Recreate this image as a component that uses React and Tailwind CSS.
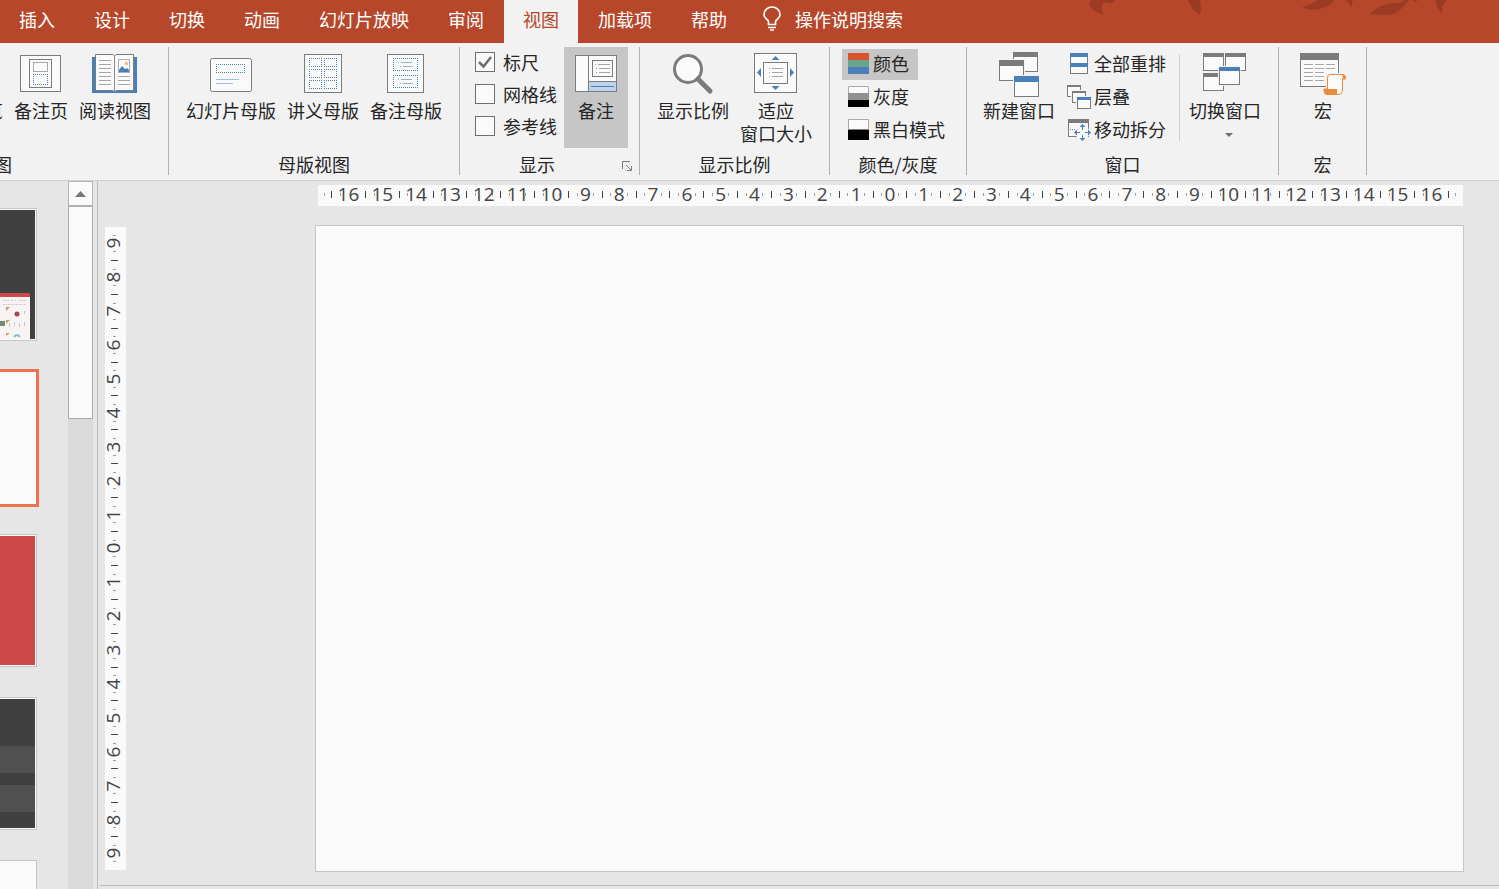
import React from "react";

const tabs = ["插入", "设计", "切换", "动画", "幻灯片放映", "审阅", "视图", "加载项", "帮助"];

// dotted placeholder outline, dots sit on whole pixels
const Dotted = ({ x, y, w, h }) => (
  <path
    d={`M${x} ${y + 0.5}h${w}M${x} ${y + h - 0.5}h${w}M${x + 0.5} ${y}v${h}M${x + w - 0.5} ${y}v${h}`}
    fill="none"
    stroke="#4a80b9"
    strokeDasharray="1 1"
  />
);

const NotesPageIcon = () => (
  <svg width="42" height="44" viewBox="0 0 42 44" fill="#fafafa" stroke="#7b7b7b">
    <rect x="0.5" y="3.5" width="40" height="36" />
    <rect x="9.5" y="7.5" width="22" height="28" />
    <rect x="13.5" y="10.5" width="14" height="9" stroke="#a8a8a8" />
    <Dotted x={13} y={22} w={15} h={11} />
  </svg>
);

const ReadingIcon = () => (
  <svg width="46" height="44" viewBox="0 0 46 44">
    <rect x="0" y="5" width="45" height="36" fill="#4a80b9" />
    <path d="M3.5 2.5H21L22.5 4L24 2.5H41.5V38.5H25L22.5 39.5L20 38.5H3.5Z" fill="#fafafa" stroke="#7b7b7b" />
    <path d="M22.5 4V39" stroke="#8a8a8a" />
    <path d="M7 8.5H19M7 12.5H19M7 16.5H19M7 20.5H19M7 24.5H19M7 28.5H19M7 32.5H19M26 24.5H38M26 28.5H38M26 32.5H38" stroke="#a6a6a6" />
    <rect x="26.5" y="7.5" width="11" height="13" fill="#fafafa" stroke="#b0b0b0" />
    <path d="M27 20V18L30 14L33 17L35 16L37 18V20Z" fill="#4a80b9" />
    <circle cx="34.5" cy="11.5" r="1.8" fill="#eebe7a" />
  </svg>
);

const SlideMasterIcon = () => (
  <svg width="42" height="44" viewBox="0 0 42 44" fill="none">
    <rect x="0.5" y="6.5" width="41" height="33" rx="2" fill="#fafafa" stroke="#7b7b7b" />
    <Dotted x={6} y={12} w={29} h={9} />
    <path d="M6 27.5H29M6 31.5H23" stroke="#a3c0de" />
  </svg>
);

const HandoutMasterIcon = () => (
  <svg width="38" height="44" viewBox="0 0 38 44" fill="none">
    <rect x="0.5" y="2.5" width="37" height="38" fill="#fafafa" stroke="#7b7b7b" />
    {[6, 17, 28].map((y) => (
      <g key={y}>
        <Dotted x={5} y={y} w={13} h={9} />
        <Dotted x={20} y={y} w={13} h={9} />
      </g>
    ))}
  </svg>
);

const NotesMasterIcon = () => (
  <svg width="38" height="44" viewBox="0 0 38 44" fill="none">
    <rect x="0.5" y="2.5" width="36" height="38" fill="#fafafa" stroke="#7b7b7b" />
    {[6, 23].map((y) => (
      <g key={y}>
        <Dotted x={6} y={y} w={25} h={13} />
        <path d={`M11 ${y + 4.5}h1M14 ${y + 4.5}h11M13 ${y + 8.5}h1M16 ${y + 8.5}h10`} stroke="#8fb2d6" />
      </g>
    ))}
  </svg>
);

const NotesIcon = () => (
  <svg width="42" height="44" viewBox="0 0 42 44" fill="none">
    <rect x="0.5" y="3.5" width="41" height="36" fill="#fafafa" stroke="#7b7b7b" />
    <rect x="14" y="30" width="27" height="9" fill="#bdd3ea" />
    <path d="M13.5 4V39M14 29.5H41" stroke="#7b7b7b" />
    <path d="M16 34.5H39" stroke="#4a80b9" />
    <rect x="17.5" y="8.5" width="20" height="16" stroke="#7b7b7b" />
    <path d="M20 12.5h1M23 12.5h12M21 16.5h1M24 16.5h11M21 20.5h1M24 20.5h11" stroke="#a6a6a6" />
  </svg>
);

const ZoomIcon = () => (
  <svg width="42" height="44" viewBox="0 0 42 44" fill="none" stroke="#7b7b7b">
    <circle cx="16" cy="17" r="13.5" fill="#fafafa" strokeWidth="3" />
    <path d="M26 27L38 39" strokeWidth="5" strokeLinecap="round" />
  </svg>
);

const FitIcon = () => (
  <svg width="44" height="44" viewBox="0 0 44 44" fill="none">
    <rect x="0.5" y="1.5" width="42" height="39" fill="#fafafa" stroke="#7b7b7b" />
    <rect x="9.5" y="10.5" width="24" height="21" stroke="#7b7b7b" />
    <path d="M17.5 8L21.5 4L25.5 8ZM17.5 34H25.5L21.5 38ZM7 16V25L3 20.5ZM36 16V25L40 20.5Z" fill="#4a80b9" />
    <path d="M15 16.5h1M18 16.5h11M15 20.5h1M18 20.5h11M15 24.5h1M18 24.5h11" stroke="#a6a6a6" />
  </svg>
);

// small window with a title bar, shared by the window icons
const Win = ({ x, y, w, h, bar = 5, color = "#7b7b7b" }) => (
  <g>
    <rect x={x - 1} y={y - 1} width={w + 2} height={h + 2} fill="#f2f2f2" />
    <rect x={x + 0.5} y={y + 0.5} width={w - 1} height={h - 1} fill="#fafafa" stroke="#7b7b7b" />
    <rect x={x} y={y} width={w} height={bar} fill={color} />
  </g>
);

const NewWindowIcon = () => (
  <svg width="40" height="46" viewBox="0 2 40 46">
    <Win x={14} y={1} w={25} h={21} bar={6} />
    <Win x={0} y={10} w={25} h={21} bar={6} />
    <Win x={15} y={26} w={25} h={21} bar={6} color="#4a80b9" />
  </svg>
);

const SwitchWindowIcon = () => (
  <svg width="44" height="44" viewBox="0 0 44 44">
    <Win x={0} y={1} w={21} h={18} bar={4} />
    <Win x={22} y={1} w={21} h={18} bar={4} />
    <Win x={0} y={21} w={21} h={18} bar={4} />
    <Win x={16} y={15} w={21} h={18} bar={4} color="#4a80b9" />
  </svg>
);

const MacroIcon = () => (
  <svg width="46" height="44" viewBox="0 0 46 44">
    <Win x={0} y={1} w={39} h={34} bar={7} />
    <path
      d="M4 12.5h9M15 12.5h9M26 12.5h9M4 16.5h9M15 16.5h9M26 16.5h9M4 20.5h9M15 20.5h9M4 24.5h9M15 24.5h9M4 28.5h9M15 28.5h9"
      stroke="#a6a6a6"
    />
    <path d="M26 21H44V43H23V35H26Z" fill="#f2f2f2" />
    <path d="M43 22.5H30Q27.5 22.5 27.5 26V37H24Q24 42.5 27 42.5H39Q42.5 42 42.5 38V27H45.5V25Q45 22.5 43 22.5" fill="#fafafa" stroke="#e88d3d" />
    <path d="M42.5 23Q46 23 46 27H42.5ZM24 37H37V42.5H27Q23 42 24 37Z" fill="#e88d3d" />
  </svg>
);

const ArrangeIcon = () => (
  <svg width="24" height="24" viewBox="0 0 24 24">
    <rect x="3.5" y="2.5" width="17" height="19" fill="#fafafa" stroke="#7b7b7b" />
    <path d="M3 1H21V5H3ZM3 11H21V15H3Z" fill="#4a80b9" />
  </svg>
);

const CascadeIcon = () => (
  <svg width="24" height="24" viewBox="0 0 24 24">
    <Win x={0} y={0} w={14} h={12} bar={2} />
    <Win x={5} y={6} w={14} h={12} bar={2} />
    <Win x={10} y={12} w={14} h={12} bar={3} color="#4a80b9" />
  </svg>
);

const MoveSplitIcon = () => (
  <svg width="24" height="24" viewBox="0 0 24 24" fill="none">
    <Win x={1} y={1} w={21} h={18} bar={4} />
    <path d="M3 11.5H20" stroke="#7b7b7b" strokeDasharray="1 1" />
    <path d="M15.5 5L20 9L24 14.500L20 20L15.500 24L11 20L6 14.500L11 9Z" fill="#fafafa" />
    <path d="M15.5 8V12M15.5 17V21M9 14.5H13M18 14.5H22" stroke="#4a80b9" />
    <path
      d="M12.5 9L15.5 6L18.5 9ZM12.5 20L15.5 23L18.5 20ZM10 11.5L7 14.5L10 17.5ZM21 11.5L24 14.5L21 17.5Z"
      fill="#4a80b9"
    />
  </svg>
);

const Swatch = ({ colors, framed }) => (
  <svg width="21" height="21" viewBox="0 0 21 21">
    {colors.map((c, i) => (
      <rect key={i} y={(21 / colors.length) * i} width="21" height={21 / colors.length} fill={c} />
    ))}
    {framed && <path d={`M0.5 ${21 / colors.length}V0.5H20.5V${21 / colors.length}`} fill="none" stroke="#b0a8a8" />}
  </svg>
);

const BigButton = ({ icon, label, children, className = "" }) => (
  <button className={`flex shrink-0 flex-col items-center pt-[5px] ${className}`}>
    <span className="flex h-[47px] items-start">{icon}</span>
    <span className="whitespace-pre-line leading-[23px]">{label}</span>
    {children}
  </button>
);

const SmallButton = ({ icon, label, active }) => (
  <button className={`flex h-[31px] items-center gap-1 pb-[2px] pl-[6px] pr-[9px] ${active ? "bg-[#c6c6c6]" : ""}`}>
    {icon}
    <span className="whitespace-nowrap">{label}</span>
  </button>
);

const Group = ({ label, children, className = "" }) => (
  <section className="flex h-32 shrink-0 flex-col justify-between border-r border-[#b1b1b1]">
    <div className={`flex h-[101px] items-stretch ${className}`}>{children}</div>
    <h2 className="flex h-[22px] items-center justify-center whitespace-nowrap">{label}</h2>
  </section>
);

const Check = ({ id, label, defaultChecked }) => (
  <label htmlFor={id} className="flex h-8 items-center gap-2 whitespace-nowrap pb-[2px]">
    <span className="grid size-5">
      <input
        id={id}
        type="checkbox"
        defaultChecked={defaultChecked}
        className="peer size-5 appearance-none border border-[#6f6f6f] bg-[#fafafa] [grid-area:1/1]"
      />
      <svg viewBox="0 0 20 20" className="pointer-events-none hidden size-5 [grid-area:1/1] peer-checked:block">
        <path d="M4 10L8.5 14.5L16 5" fill="none" stroke="#6f6f6f" strokeWidth="2.5" />
      </svg>
    </span>
    {label}
  </label>
);

function Ruler({ max, vertical }) {
  const numbers = [];
  for (let n = -max; n <= max; n++) numbers.push(Math.abs(n));
  const minor = vertical ? "h-px w-[3px] bg-[#a0a0a0]" : "h-[3px] w-px bg-[#a0a0a0]";
  const major = vertical ? "h-px w-[7px] bg-[#444]" : "h-[7px] w-px bg-[#444]";
  const dir = vertical ? "flex-col" : "flex-row";
  return (
    <div
      className={`flex items-center bg-[#fafafa] text-[19px] leading-[17px] text-[#444] [font-family:'Open_Sans','Noto_Sans',sans-serif] ${dir} ${
        vertical ? "w-[21px] shrink-0 pr-[2px]" : "h-[21px] pb-[2px]"
      }`}
    >
      {!vertical && (
        <div className="flex w-[13px] justify-center">
          <i className={minor} />
        </div>
      )}
      {numbers.map((n, i) => (
        <React.Fragment key={i}>
          {(i > 0 || !vertical) && <i className={major} />}
          <div className="grid min-h-0 min-w-0 flex-1 place-items-center self-stretch">
            <div className={`flex items-center justify-around [grid-area:1/1] ${dir} ${vertical ? "h-full" : "w-full"}`}>
              <i className={minor} />
              <i className={minor} />
            </div>
            <span className={`[grid-area:1/1] ${vertical ? "-rotate-90 pb-px" : "pb-px"}`}>{n}</span>
          </div>
        </React.Fragment>
      ))}
      {!vertical && (
        <>
          <i className={major} />
          <div className="flex w-[14px] justify-center">
            <i className={minor} />
          </div>
        </>
      )}
    </div>
  );
}

const Thumb = ({ children, className = "" }) => (
  <div className={`h-[133px] w-[37px] shrink-0 border border-l-0 border-[#c6c6c6] bg-[#fafafa] py-px pr-px ${className}`}>
    {children}
  </div>
);

const TemplatePreview = () => (
  <svg width="35" height="129" viewBox="0 0 35 129" className="bg-[#404040]">
    <rect y="83" width="30" height="46" fill="#f8f4f4" />
    <rect y="83" width="30" height="4" fill="#cd4a4a" />
    <path d="M3 90.5h6M11 90.5h5M19 90.5h7M3 94.5h24" stroke="#d0d0d0" strokeDasharray="3 1" />
    <circle cx="17" cy="104" r="2.5" fill="#a84550" />
    <path d="M6 97l4 0l-4 4zM6 110l4 0l-4 4zM6 123l4 0l-4 3z" fill="#c3a070" />
    <rect y="111" width="5" height="5" fill="#6f8a78" />
    <path d="M9.5 113v4M14.5 112v4M19.5 113v4M24.5 112v4M24.5 101v3" stroke="#c4c4c4" />
    <path d="M14 127q3-4 6 0" stroke="#7bc4d3" strokeWidth="2" fill="none" />
  </svg>
);

const App = () => {
  return (
    <div className="flex h-screen flex-col overflow-hidden bg-[#e6e6e6] text-[18px] text-[#262626] [font-family:'Noto_Sans_CJK_SC',sans-serif]">
      <header className="flex h-[43px] shrink-0 justify-between bg-[#b7472a] text-white">
        <nav className="flex shrink-0 gap-px">
          {tabs.map((tab) => (
            <button
              key={tab}
              className={`px-[19px] pb-[5px] ${tab === "视图" ? "bg-[#f2f2f2] text-[#b7472a]" : ""}`}
            >
              {tab}
            </button>
          ))}
          <button className="flex items-center gap-[14px] pb-[5px] pl-4">
            <svg width="18" height="26" viewBox="0 0 18 26" fill="none" stroke="#fff" strokeWidth="1.7">
              <path d="M5.5 18.5V16Q5.5 14.5 3.5 13Q1 11 1 8.5A8 7.5 0 0 1 17 8.5Q17 11 14.5 13Q12.5 14.5 12.5 16V18.5Z" />
              <path d="M5 21.5H13M7 24H11" />
            </svg>
            操作说明搜索
          </button>
        </nav>
        <svg width="419" height="24" viewBox="1080 0 419 24" fill="#9c3b24">
          <path d="M1091 0H1115Q1113 4 1109 3Q1103 1 1102 5Q1101 10 1104 15Q1090 11 1089 3Z" />
          <path d="M1188 0H1200Q1202 8 1200 15Q1192 11 1188 0Z" />
          <path d="M1302 7Q1310 5 1318 0H1335Q1327 9 1315 9.500Q1306 10 1302 7Z" />
          <path d="M1346 0H1353Q1351 4 1352 8Q1349 3 1346 0Z" />
          <path d="M1370 14Q1378 5 1392 3Q1400 4 1405 0H1409Q1405 6 1401 9Q1394 16 1384 15Q1376 15 1370 14Z" />
          <path d="M1412 0h6l-2 1.500zM1436 0H1447Q1441 6 1442 14Q1435 7 1436 0Z" />
        </svg>
      </header>

      <div className="flex h-[138px] shrink-0 overflow-hidden border-b border-[#d0d0d0] bg-[#f2f2f2] pt-1">
        <section className="flex h-32 w-[169px] shrink-0 flex-col justify-between overflow-hidden border-r border-[#b1b1b1]">
          <div className="flex h-[101px] justify-end gap-[11px] pr-[17px]">
            <BigButton label="幻灯片浏览" />
            <BigButton icon={<NotesPageIcon />} label="备注页" />
            <BigButton icon={<ReadingIcon />} label="阅读视图" />
          </div>
          <h2 className="flex h-[22px] items-center justify-end whitespace-nowrap pr-[156px]">演示文稿视图</h2>
        </section>

        <Group label="母版视图" className="gap-[11px] px-[17px]">
          <BigButton icon={<SlideMasterIcon />} label="幻灯片母版" />
          <BigButton icon={<HandoutMasterIcon />} label="讲义母版" />
          <BigButton icon={<NotesMasterIcon />} label="备注母版" />
        </Group>

        <Group
          className="gap-[7px] pl-[15px] pr-[11px]"
          label={
            <>
              <span className="flex-1 pr-2 text-center">显示</span>
              <button aria-label="显示设置" className="mr-[7px] mt-1">
                <svg width="10" height="10" viewBox="0 0 10 10" fill="none" stroke="#7b7b7b">
                  <path d="M0.5 8V0.5H8M4 4L9 9M9.5 5V9.5H5" />
                </svg>
              </button>
            </>
          }
        >
          <div className="flex flex-col">
            <Check id="ruler" label="标尺" defaultChecked />
            <Check id="gridlines" label="网格线" />
            <Check id="guides" label="参考线" />
          </div>
          <BigButton icon={<NotesIcon />} label="备注" className="bg-[#c6c6c6] px-[11px]" />
        </Group>

        <Group label="显示比例" className="gap-[11px] px-[17px]">
          <BigButton icon={<ZoomIcon />} label="显示比例" />
          <BigButton icon={<FitIcon />} label={"适应\n窗口大小"} />
        </Group>

        <Group label="颜色/灰度" className="pl-3 pr-3">
          <div className="flex flex-col items-start gap-[2px] pt-[2px]">
            <SmallButton icon={<Swatch colors={["#d9532f", "#69a58c", "#4a80b9"]} />} label="颜色" active />
            <SmallButton icon={<Swatch colors={["#fafafa", "#919191", "#000"]} framed />} label="灰度" />
            <SmallButton icon={<Swatch colors={["#fafafa", "#000"]} framed />} label="黑白模式" />
          </div>
        </Group>

        <Group label="窗口" className="gap-[9px] pl-4 pr-[17px]">
          <BigButton icon={<NewWindowIcon />} label="新建窗口" />
          <div className="flex flex-col gap-[2px] pr-1 pt-[2px]">
            {[
              ["全部重排", <ArrangeIcon />],
              ["层叠", <CascadeIcon />],
              ["移动拆分", <MoveSplitIcon />],
            ].map(([label, icon]) => (
              <button key={label} className="flex h-[31px] items-center gap-[3px] whitespace-nowrap pb-[2px] pl-[3px]">
                {icon}
                {label}
              </button>
            ))}
          </div>
          <div className="my-[7px] w-px bg-[#d0d0d0]" />
          <BigButton icon={<SwitchWindowIcon />} label="切换窗口">
            <svg width="8" height="4" viewBox="0 0 8 4" className="ml-2 mt-[11px]">
              <path d="M0 0H8L4 4Z" fill="#6f6f6f" />
            </svg>
          </BigButton>
        </Group>

        <Group label="宏" className="pl-[21px] pr-5">
          <BigButton icon={<MacroIcon />} label="宏" />
        </Group>
      </div>

      <div className="flex min-h-0 flex-1">
        <aside className="flex w-[98px] shrink-0 justify-between overflow-hidden border-r border-[#bdbdbd] pr-1">
          <div className="flex shrink-0 flex-col pt-[27px]">
            <Thumb>
              <TemplatePreview />
            </Thumb>
            <div className="mb-[27px] mt-[28px] h-[138px] w-[39px] shrink-0 border-[3px] border-l-0 border-[#f07050] bg-[#fafafa]" />
            <Thumb>
              <div className="h-full bg-[#cd4a4a]" />
            </Thumb>
            <Thumb className="mt-[30px]">
              <div className="flex h-full flex-col bg-[#404040] pt-[47px]">
                <div className="h-[27px] bg-[#505050]" />
                <div className="mt-3 h-[27px] bg-[#505050]" />
              </div>
            </Thumb>
            <Thumb className="mt-[30px]" />
          </div>
          <div className="flex w-[25px] flex-col bg-[#dadada]">
            <button aria-label="向上滚动" className="grid h-[25px] place-items-center border border-[#b5b5b5] bg-[#fafafa]">
              <svg width="11" height="6" viewBox="0 0 11 6">
                <path d="M5.5 0L11 6H0Z" fill="#777" />
              </svg>
            </button>
            <div className="h-[213px] border border-[#ababab] bg-[#fafafa]" />
          </div>
        </aside>

        <main className="flex min-w-0 flex-1 flex-col">
          <div className="pl-[220px] pr-9 pt-1">
            <Ruler max={16} />
          </div>
          <div className="flex min-h-0 flex-1 pb-[13px] pl-[7px] pr-[35px] pt-[19px]">
            <div className="flex pb-[2px] pt-[2px]">
              <Ruler max={9} vertical />
            </div>
            <div className="ml-[189px] flex-1 border border-[#c6c6c6] bg-[#fafafa]" />
          </div>
          <div className="ml-[2px] h-1 border-t border-[#b8b8b8]" />
        </main>
      </div>
    </div>
  );
};

export default App;
